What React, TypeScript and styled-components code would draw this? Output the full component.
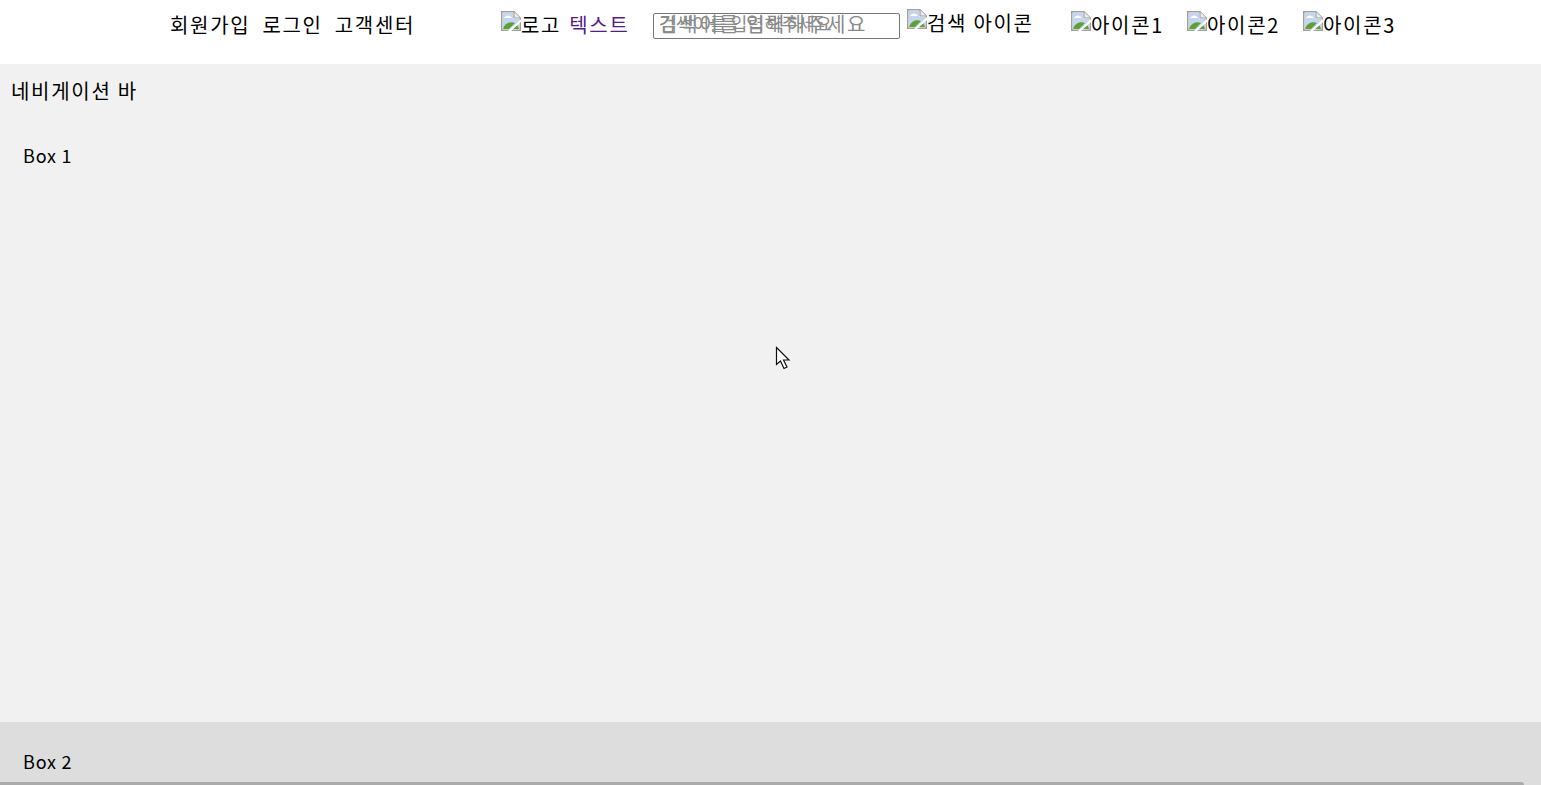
import styled, { createGlobalStyle } from "styled-components";

const GlobalStyle = createGlobalStyle`
  html, body {
    margin: 0;
    padding: 0;
    height: 100%;
    overflow: hidden;
    background: #f1f1f1;
  }
  body {
    font-family: "Noto Sans CJK KR", "Noto Sans", sans-serif;
    color: #000;
  }
`;

const Page = styled.div`
  display: flex;
  flex-direction: column;
  height: 785px;
  overflow: hidden;
  position: relative;
`;

const Header = styled.header`
  display: flex;
  align-items: flex-start;
  height: 64px;
  flex: none;
  padding-left: 170px;
  background: #fff;
  font-size: 20px;
  line-height: 29px;
  letter-spacing: 1.7px;
`;

const AuthLinks = styled.div`
  display: flex;
  gap: 12px;
  width: 331px;
  padding-top: 10px;
`;

const LogoArea = styled.div`
  display: flex;
  align-items: flex-start;
  width: 152px;
  padding-top: 10px;
`;

const LogoLink = styled.a`
  color: #551a8b;
  margin-left: 8px;
`;

const SearchWrap = styled.div`
  position: relative;
  width: 247px;
  margin-top: 13px;
`;

const SearchInput = styled.input`
  box-sizing: border-box;
  display: block;
  width: 247px;
  height: 26px;
  padding: 0 5px 5px;
  border: 1px solid #767676;
  border-radius: 2px;
  background: #fff;
  font: inherit;
  font-size: 20px;
  line-height: 20px;
  letter-spacing: 1.8px;
  &::placeholder {
    color: #8a8a8a;
    opacity: 1;
  }
`;

const OverlapLabel = styled.span`
  position: absolute;
  left: 6px;
  top: -4px;
  font-size: 18px;
  letter-spacing: 0.3px;
  color: #8a8a8a;
  white-space: nowrap;
  pointer-events: none;
`;

const SearchIcon = styled.div`
  display: flex;
  align-items: flex-start;
  width: 164px;
  margin-left: 7px;
  padding-top: 8px;
`;

const IconRow = styled.div`
  display: flex;
  padding-top: 10px;
`;

const IconItem = styled.div`
  display: flex;
  align-items: flex-start;
  width: 116px;
`;

const Broken = styled.svg`
  flex: none;
  width: 20px;
  height: 20px;
  margin-top: 1px;
`;

const Nav = styled.nav`
  flex: none;
  height: 52px;
  padding: 12px 0 0 11px;
  font-size: 20px;
  line-height: 29px;
  letter-spacing: 1.7px;
  box-sizing: border-box;
`;

const BoxOne = styled.section`
  flex: none;
  height: 606px;
  padding: 26px 0 0 23px;
  box-sizing: border-box;
  font-size: 18px;
  line-height: 26px;
  letter-spacing: 0.8px;
  background: #f1f1f1;
`;

const BoxTwo = styled.section`
  flex: 1;
  padding: 26px 0 0 23px;
  font-size: 18px;
  line-height: 26px;
  letter-spacing: 0.8px;
  background: #ddd;
`;

const ScrollThumb = styled.div`
  position: absolute;
  left: 0;
  bottom: 0;
  width: 1524px;
  height: 3px;
  background: #ababab;
  border-top-right-radius: 3px;
`;

const Cursor = styled.svg`
  position: absolute;
  left: 775px;
  top: 346px;
  width: 17px;
  height: 25px;
`;

function BrokenImage() {
  return (
    <Broken viewBox="0 0 20 20" aria-hidden="true">
      <path d="M0.75 0.75H13L19.25 7V19.25H0.75Z" fill="#fff" stroke="#a0a0a0" strokeWidth="1.5" />
      <path d="M13 0.75V7H19.25" fill="#ececec" stroke="#a0a0a0" strokeWidth="1.2" />
      <path d="M2 2H12V8H18V18H2Z" fill="#c3d5f2" />
      <path d="M3 7C5 3.5 9 3.5 11 7Z" fill="#fff" />
      <path d="M2 18C4 12 9 10 14 12L8 18Z" fill="#5fa032" />
      <path d="M15 13C16.5 14 17.5 16 18 18H11Z" fill="#5fa032" />
      <path d="M7 20L20 8V11L10 20Z" fill="#fff" />
    </Broken>
  );
}

export default function App() {
  return (
    <Page>
      <GlobalStyle />
      <Header>
        <AuthLinks>
          <span>회원가입</span>
          <span>로그인</span>
          <span>고객센터</span>
        </AuthLinks>
        <LogoArea>
          <BrokenImage />
          <span>로고</span>
          <LogoLink>텍스트</LogoLink>
        </LogoArea>
        <SearchWrap>
          <SearchInput placeholder="검색어를 입력해주세요" />
          <OverlapLabel>검색어를 입력해주세요</OverlapLabel>
        </SearchWrap>
        <SearchIcon>
          <BrokenImage />
          <span>검색 아이콘</span>
        </SearchIcon>
        <IconRow>
          {["아이콘1", "아이콘2", "아이콘3"].map((label) => (
            <IconItem key={label}>
              <BrokenImage />
              <span>{label}</span>
            </IconItem>
          ))}
        </IconRow>
      </Header>
      <Nav>네비게이션 바</Nav>
      <BoxOne>Box 1</BoxOne>
      <BoxTwo>Box 2</BoxTwo>
      <ScrollThumb />
      <Cursor viewBox="0 0 17 25" aria-hidden="true">
        <path
          d="M1.5 1.5V18.5L5.5 15L9 22.5L12 21L8.5 14H14Z"
          fill="#fff"
          stroke="#111"
          strokeWidth="1.2"
        />
      </Cursor>
    </Page>
  );
}
